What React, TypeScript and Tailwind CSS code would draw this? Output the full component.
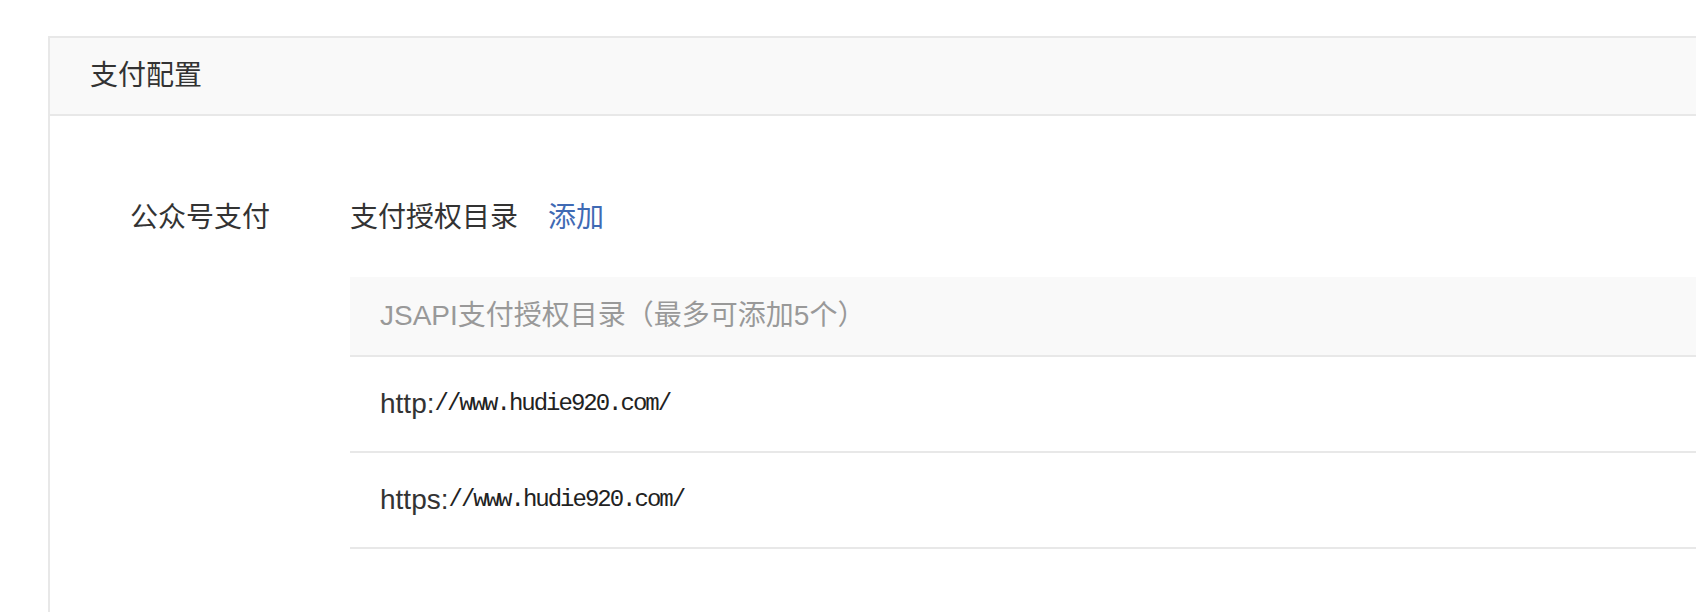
const urls = [
  { scheme: "http:", rest: "//www.hudie920.com/" },
  { scheme: "https:", rest: "//www.hudie920.com/" },
];

const sans = "font-['Liberation_Sans','Noto_Sans_CJK_SC',sans-serif]";

const App = () => {
  return (
    <div className={`h-[612px] overflow-hidden bg-white pt-[36px] pl-[48px] text-[#333] ${sans}`}>
      <div className="min-h-[600px] border-l-2 border-t-2 border-[#e8e8e8]">
        {/* panel header */}
        <div className="flex h-[78px] items-center border-b-2 border-[#e8e8e8] bg-[#f9f9f9] pl-[40px] text-[28px]">
          支付配置
        </div>

        <div className="flex pt-[82px]">
          <div className="w-[300px] shrink-0 pl-[80px] text-[28px] leading-[40px]">公众号支付</div>

          <div className="flex-1">
            <div className="flex items-center text-[28px] leading-[40px]">
              <span>支付授权目录</span>
              <span className="ml-[30px] cursor-pointer text-[#3f6ab4]">添加</span>
            </div>

            <div className="mt-[39px]">
              <div className="flex h-[80px] items-center border-b-2 border-[#e8e8e8] bg-[#f9f9f9] pl-[30px] text-[28px] text-[#999]">
                JSAPI支付授权目录（最多可添加5个）
              </div>
              {urls.map((u) => (
                <div
                  key={u.scheme}
                  className="flex h-[96px] items-center border-b-2 border-[#e8e8e8] pl-[30px] text-[28px]"
                >
                  <span>{u.scheme}</span>
                  <span className="font-['Liberation_Mono',monospace] text-[24px] tracking-[-2px] text-[#222]">
                    {u.rest}
                  </span>
                </div>
              ))}
            </div>
          </div>
        </div>
      </div>
    </div>
  );
};

export default App;
